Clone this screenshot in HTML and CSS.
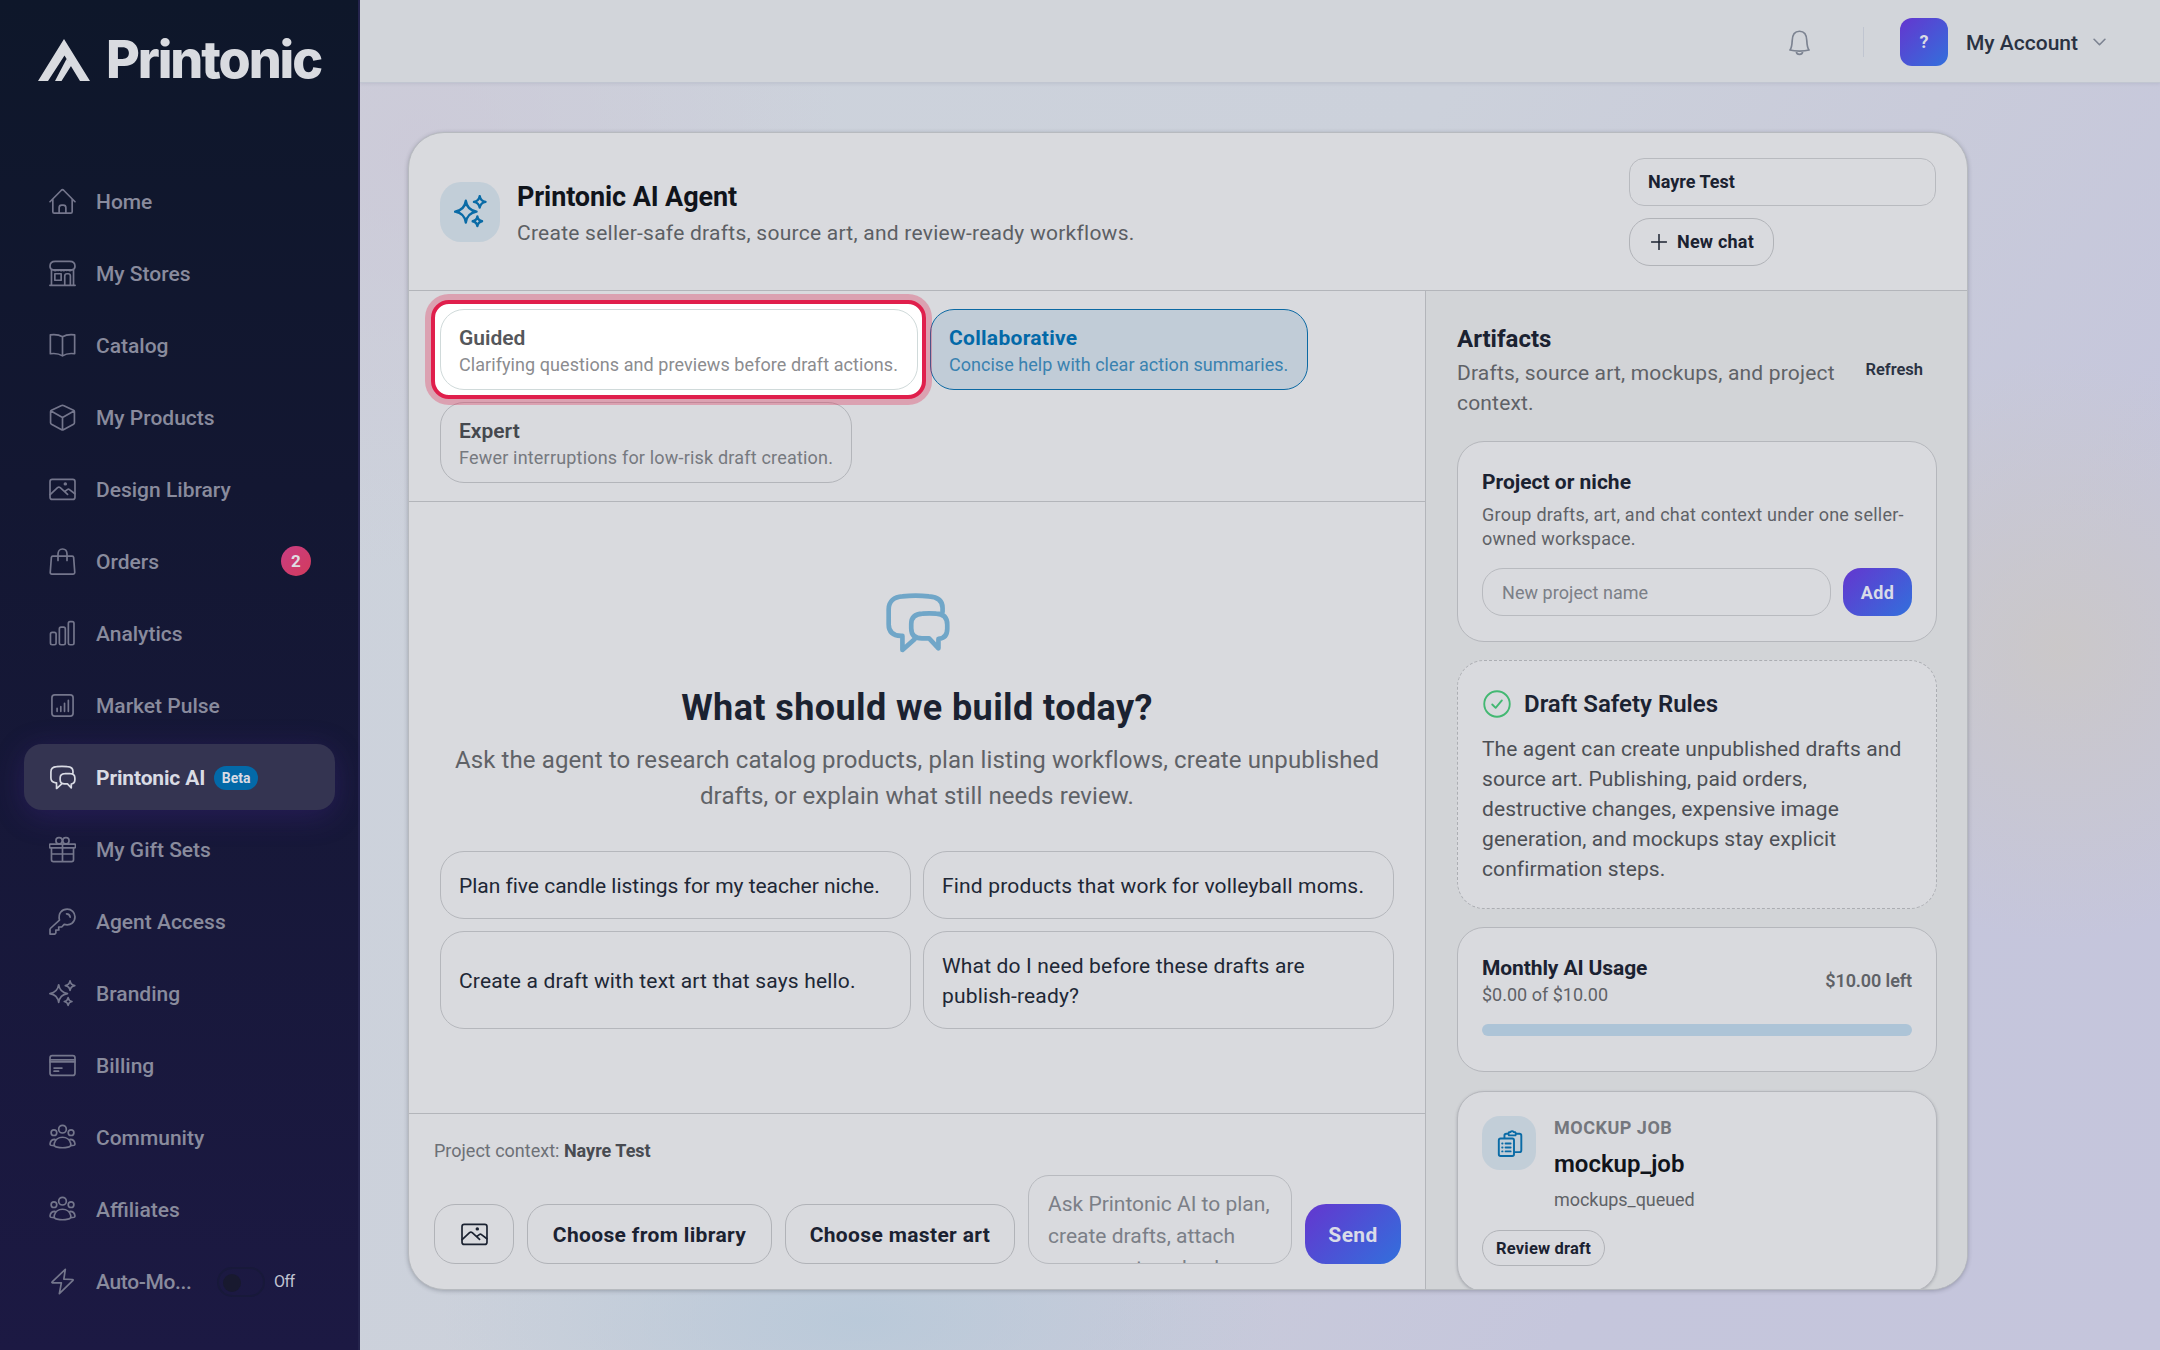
FILE: index.html
```
<!DOCTYPE html>
<html lang="en">
<head>
  <meta charset="UTF-8" />
  <meta name="viewport" content="width=device-width, initial-scale=1.0" />
  <title>Printonic AI Agent</title>
  <link rel="stylesheet" href="styles.css">
</head>
<body>
  <!-- Shared icons -->
  <svg class="sprite">
    <symbol id="i-home" viewBox="0 0 24 24"><path d="M.9 12.2 11 2q1-.9 2 0l10.100 10.200M3.400 10v11q0 1.300 1.300 1.300h14.600q1.300 0 1.300-1.300V10M9 22v-4.500q0-2.300 2.300-2.300h1.400q2.300 0 2.300 2.300V22"/></symbol>
    <symbol id="i-store" viewBox="0 0 24 24"><path d="M.8 22.500h22.400M2.200 22.500V8.300M21.800 22.500V8.300M5.500 1.300h13c3 0 4.600 1.600 4.600 4.200 0 1.900-1 3-2.700 3.300H3.600C1.900 8.500.9 7.400.9 5.500c0-2.600 1.600-4.200 4.600-4.200zM3.600 8.800q2 1.300 3.700 0 1 1 2.400 0 1 1.300 2.400 0 1 1.300 2.400 0 1.300 1 2.400 0 1.700 1.300 3.500 0M5.200 12.200h5.600v5.800H5.200zM14 22.500v-8.300q0-2 2-2h1q2 0 2 2v8.300"/></symbol>
    <symbol id="i-book" viewBox="0 0 24 24"><path d="M12 4.200C9 2.400 5 2 1.200 2.500v16.800c3.800-.5 7.800-.1 10.800 1.900 3-2 7-2.400 10.800-1.900V2.500C19 2 15 2.400 12 4.200zm0 0v17"/></symbol>
    <symbol id="i-box" viewBox="0 0 24 24"><path d="M12 1.200q.4 0 .8.200l9 4.200q.8.400.8 1.200v9.800q0 .9-.8 1.300l-9 4.900q-.8.400-1.600 0l-9-4.900q-.8-.4-.8-1.300V6.800q0-.8.800-1.200l9-4.200q.4-.2.800-.2zM1.800 6.300 12 12l10.200-5.700M12 12v11"/></symbol>
    <symbol id="i-image" viewBox="0 0 24 24"><rect x=".9" y="3" width="22.200" height="17.800" rx="2"/><path d="M1 16.500l6.600-6.200q1.200-1 2.400 0l6.500 6M14 13.800l2.300-1.700q1-.7 1.900 0l4.800 3.700"/><circle cx="14.500" cy="7" r=".8"/></symbol>
    <symbol id="i-bag" viewBox="0 0 24 24"><path d="M3.300 7.300h17.400q1 0 1.200 1l1 13.500q0 1.400-1.400 1.400H2.500q-1.400 0-1.400-1.400l1-13.500q.2-1 1.200-1zM8 11V5.500C8 2.800 9.500.9 12 .9s4 1.900 4 4.600V11"/></symbol>
    <symbol id="i-bars" viewBox="0 0 24 24"><rect x="1.300" y="11" width="5" height="11" rx="1.500"/><rect x="9.200" y="6.300" width="5.300" height="15.700" rx="1.500"/><rect x="17.200" y="1.500" width="5" height="20.500" rx="1.500"/></symbol>
    <symbol id="i-chart" viewBox="0 0 24 24"><rect x="2.600" y="2.600" width="18.800" height="18.800" rx="2.500"/><path d="M7.200 14.500v2.700M10.500 13v4.200M13.800 10v7.200M17.200 7.500v9.700"/></symbol>
    <symbol id="i-chat" viewBox="0 0 24 24"><path d="M21.300 8V6.500c0-3-2-4-5-4.200a50 50 0 0 0-9.600 0C3.700 2.500 1.700 4 1.700 7v5.500c0 2.700 1.500 4 4.500 4.200h.5v5.100l4.400-3.900M14 8.600q2.500-.2 5 0c2.600.1 4 1.400 4 4v1.500c0 2.300-1 3.500-3.200 3.700v3.400l-3.400-3.600h-2.600c-2.600 0-3.900-1.300-3.900-3.700v-1.500c0-2.600 1.400-3.700 4.100-3.800z"/></symbol>
    <symbol id="i-gift" viewBox="0 0 24 24"><path d="M.9 7.200h22.200q.4 0 .4.700v1.700q0 .9-.9.900H1.400q-.9 0-.9-.9V7.900q0-.7.400-.7zM2.200 10.500V21q0 1.700 1.700 1.700h16.200q1.700 0 1.700-1.700V10.500M12 7.200v15.500M2.200 16h19.600"/><rect x="6.200" y="1.500" width="5.500" height="5.500" rx="2.500"/><rect x="12.300" y="1.500" width="5.500" height="5.500" rx="2.500"/></symbol>
    <symbol id="i-key" viewBox="0 0 24 24"><path d="M9.300 10.700C7.900 4.600 11.500 1 16.200 1c3.800 0 6.900 3 6.900 6.800 0 4.800-3.800 8.200-9.600 6.800l-2.200 2.300H8.600l.1 2.600-2.600.2v2.500l-1 1H.9v-4q0-.7.500-1.200zM15.600 5.200q2.800 0 3.200 3"/></symbol>
    <symbol id="i-sparkles" viewBox="0 0 24 24"><path d="M8.600 4.200c.6 4.300 3.400 7.200 7.800 7.900-4.400.7-7.200 3.600-7.800 7.900-.6-4.300-3.400-7.200-7.800-7.900 4.400-.7 7.200-3.600 7.800-7.900zM18.700.8c.4 2.300 1.900 3.800 4.200 4.200-2.300.4-3.800 1.900-4.200 4.200-.4-2.300-1.900-3.800-4.200-4.200 2.300-.4 3.800-1.900 4.200-4.200zM17 15.600c.3 1.900 1.500 3.100 3.400 3.500-1.900.4-3.100 1.600-3.400 3.500-.3-1.900-1.500-3.100-3.400-3.500 1.900-.4 3.100-1.600 3.400-3.500z"/></symbol>
    <symbol id="i-card" viewBox="0 0 24 24"><rect x=".9" y="3.200" width="22.200" height="17.600" rx="2"/><path d="M1 7h22M1 8.800h22M4.500 14.300h7M4.500 17h4"/></symbol>
    <symbol id="i-people" viewBox="0 0 24 24"><circle cx="12" cy="4.600" r="3.400"/><circle cx="4.400" cy="7.700" r="2.500"/><circle cx="19.600" cy="7.700" r="2.500"/><path d="M12 11.800c3.600 0 6.300 2.100 7.300 5.400.5 1.900-.5 3.100-2.400 3.400q-4.900 1-9.800 0c-1.900-.3-2.900-1.500-2.400-3.400 1-3.300 3.700-5.400 7.300-5.400zM5.300 13.700c-2.500 0-4.100 1.300-4.400 4.100q0 .9.800 1.100l2.800.3M18.700 13.700c2.500 0 4.100 1.300 4.400 4.100q0 .9-.8 1.100l-2.800.3"/></symbol>
    <symbol id="i-bolt" viewBox="0 0 24 24"><path d="M14.500 1.200 2.800 12.400q-.6.700.3.800l7.900.1-1.800 9.500L21.300 11q.5-.7-.4-.8l-7.700-.3z"/></symbol>
    <symbol id="i-bell" viewBox="0 0 24 24"><path d="M3.500 18.700c1.500-1.600 1.800-3.900 2-8.200C5.600 5.300 8 2 12 2s6.400 3.300 6.500 8.500c.2 4.300.5 6.600 2 8.200-4.500 1.200-12.500 1.200-17 0zM9.200 19.800c0 1.700 1.100 2.800 2.800 2.800s2.800-1.100 2.800-2.800"/></symbol>
    <symbol id="i-clipboard" viewBox="0 0 24 24"><path d="M7.500 7V5q0-1.700 1.700-1.700h1.600M18 3.300h2.800q1.700 0 1.700 1.700v13q0 1.700-1.700 1.700h-4.300M11.500 4.800q-1.300-3 1.300-3 1.500-1.600 3 0 2.700 0 1.500 3z"/><rect x="2.500" y="7.500" width="13.500" height="15.600" rx="1.500"/><path d="M5.500 12h.3M8.500 12h4.500M5.500 15.500h.3M8.500 15.500h4.500M5.500 19h.3M8.500 19h4.500"/></symbol>
  </svg>

  <aside class="sidebar">
    <div class="logo">
      <svg viewBox="0 0 52 42"><path fill="#d9dbe0" d="M26 0 52 42H42L26.500 16.500 10 42H0zM28.500 20l4.500 7-9.500 15H17z"/></svg>
      <span>Printonic</span>
    </div>
    <nav class="nav">
      <a class="nav-item"><svg class="icon"><use href="#i-home"/></svg>Home</a>
      <a class="nav-item"><svg class="icon"><use href="#i-store"/></svg>My Stores</a>
      <a class="nav-item"><svg class="icon"><use href="#i-book"/></svg>Catalog</a>
      <a class="nav-item"><svg class="icon"><use href="#i-box"/></svg>My Products</a>
      <a class="nav-item"><svg class="icon"><use href="#i-image"/></svg>Design Library</a>
      <a class="nav-item"><svg class="icon"><use href="#i-bag"/></svg>Orders<span class="count">2</span></a>
      <a class="nav-item"><svg class="icon"><use href="#i-bars"/></svg>Analytics</a>
      <a class="nav-item"><svg class="icon"><use href="#i-chart"/></svg>Market Pulse</a>
      <a class="nav-item active"><svg class="icon"><use href="#i-chat"/></svg>Printonic AI<span class="beta">Beta</span></a>
      <a class="nav-item"><svg class="icon"><use href="#i-gift"/></svg>My Gift Sets</a>
      <a class="nav-item"><svg class="icon"><use href="#i-key"/></svg>Agent Access</a>
      <a class="nav-item"><svg class="icon"><use href="#i-sparkles"/></svg>Branding</a>
      <a class="nav-item"><svg class="icon"><use href="#i-card"/></svg>Billing</a>
      <a class="nav-item"><svg class="icon"><use href="#i-people"/></svg>Community</a>
      <a class="nav-item"><svg class="icon"><use href="#i-people"/></svg>Affiliates</a>
      <a class="nav-item"><svg class="icon"><use href="#i-bolt"/></svg><span class="auto">Auto-Mo...</span><span class="toggle"><i></i></span><span class="off">Off</span></a>
    </nav>
  </aside>

  <div class="page">
    <header class="topbar">
      <svg class="icon bell"><use href="#i-bell"/></svg>
      <span class="divider"></span>
      <span class="avatar">?</span>
      <span class="account">My Account</span>
      <svg class="icon chevron" viewBox="0 0 12 7"><path d="m1 1 5 5 5-5"/></svg>
    </header>

    <main class="agent">
      <div class="agent-head">
        <span class="tile"><svg class="icon"><use href="#i-sparkles"/></svg></span>
        <div class="agent-title">
          <h1>Printonic AI Agent</h1>
          <p>Create seller-safe drafts, source art, and review-ready workflows.</p>
        </div>
        <div class="agent-actions">
          <div class="select">Nayre Test</div>
          <button class="btn new-chat"><svg class="icon" viewBox="0 0 16 16"><path d="M8 .5v15M.5 8h15"/></svg>New chat</button>
        </div>
      </div>

      <div class="agent-body">
        <section class="chat">
          <div class="modes">
            <button class="mode guided"><b>Guided</b><span>Clarifying questions and previews before draft actions.</span></button>
            <button class="mode selected"><b>Collaborative</b><span>Concise help with clear action summaries.</span></button>
            <button class="mode expert"><b>Expert</b><span>Fewer interruptions for low-risk draft creation.</span></button>
          </div>

          <div class="welcome">
            <svg class="icon"><use href="#i-chat"/></svg>
            <h2>What should we build today?</h2>
            <p>Ask the agent to research catalog products, plan listing workflows, create unpublished<br>drafts, or explain what still needs review.</p>
            <div class="prompts">
              <button class="plan">Plan five candle listings for my teacher niche.</button>
              <button>Find products that work for volleyball moms.</button>
              <button>Create a draft with text art that says hello.</button>
              <button>What do I need before these drafts are<br>publish-ready?</button>
            </div>
          </div>

          <div class="composer">
            <div class="context">Project context: <b>Nayre Test</b></div>
            <div class="composer-row">
              <button class="btn attach"><svg class="icon"><use href="#i-image"/></svg></button>
              <button class="btn library">Choose from library</button>
              <button class="btn master">Choose master art</button>
              <div class="message">Ask Printonic AI to plan,<br>create drafts, attach<br>source art, and ask</div>
              <button class="btn primary send">Send</button>
            </div>
          </div>
        </section>

        <aside class="artifacts">
          <div class="artifacts-head">
            <div>
              <h3>Artifacts</h3>
              <p>Drafts, source art, mockups, and project<br>context.</p>
            </div>
            <span class="refresh">Refresh</span>
          </div>

          <div class="card project">
            <h4>Project or niche</h4>
            <p>Group drafts, art, and chat context under one seller-<br>owned workspace.</p>
            <div class="project-row">
              <div class="input">New project name</div>
              <button class="btn primary add">Add</button>
            </div>
          </div>

          <div class="card safety">
            <h4><svg class="icon" viewBox="0 0 24 24"><circle cx="12" cy="12" r="10.200"/><path d="m8.200 12.400 2.700 2.700 5-6"/></svg>Draft Safety Rules</h4>
            <p>The agent can create unpublished drafts and<br>source art. Publishing, paid orders,<br>destructive changes, expensive image<br>generation, and mockups stay explicit<br>confirmation steps.</p>
          </div>

          <div class="card usage">
            <div class="usage-row">
              <div>
                <h4>Monthly AI Usage</h4>
                <p>$0.00 of $10.00</p>
              </div>
              <span>$10.00 left</span>
            </div>
            <div class="bar"></div>
          </div>

          <div class="card job">
            <div class="job-row">
              <span class="tile small"><svg class="icon"><use href="#i-clipboard"/></svg></span>
              <div>
                <div class="kind">MOCKUP JOB</div>
                <h4>mockup_job</h4>
                <p>mockups_queued</p>
              </div>
            </div>
            <button class="btn review">Review draft</button>
          </div>
        </aside>
      </div>
    </main>
  </div>
</body>
</html>
```
FILE: styles.css
```
* {
  box-sizing: border-box;
}
body {
  margin: 0;
  width: 2160px;
  height: 1350px;
  display: flex;
  overflow: hidden;
  font-family: Roboto, sans-serif;
  font-size: 21px;
  color: #1b2231;
}
h1, h2, h3, h4, p {
  margin: 0;
}
button {
  font: inherit;
  color: inherit;
  background: none;
  margin: 0;
}
.sprite {
  display: none;
}
.icon {
  width: 27px;
  height: 27px;
  flex: none;
  fill: none;
  stroke: currentColor;
  stroke-width: 1.5;
  stroke-linecap: round;
  stroke-linejoin: round;
}

/* Sidebar */
.sidebar {
  width: 360px;
  flex: none;
  padding: 0 24px;
  background: linear-gradient(180deg, #0e172a 0%, #131732 36%, #1c1943 100%);
  border-right: 2px solid #24234c;
}
.logo {
  display: flex;
  align-items: center;
  height: 120px;
  margin-bottom: 48px;
  padding-left: 14px;
}
.logo svg {
  width: 52px;
  height: 42px;
}
.logo span {
  margin-left: 16px;
  font-family: Inter, sans-serif;
  font-size: 52px;
  font-weight: 800;
  letter-spacing: -2.1px;
  line-height: 120px;
  color: #d9dbe0;
}
.nav {
  display: flex;
  flex-direction: column;
  gap: 6px;
}
.nav-item {
  width: 311px;
  height: 66px;
  display: flex;
  align-items: center;
  padding: 1px 24px 0 25px;
  border-radius: 18px;
  font-weight: 500;
  color: #898b9d;
}
.nav-item .icon {
  margin: -1px 20px 0 0;
  color: #74768c;
}
.nav-item.active {
  background: #343451;
  box-shadow: 0 6px 30px rgba(76, 40, 160, 0.3);
  font-weight: 700;
  letter-spacing: -0.15px;
  color: #d9dbe4;
}
.nav-item.active .icon {
  color: #d9dbe4;
}
.count {
  margin: -1px 0 0 auto;
  width: 30px;
  height: 30px;
  border-radius: 50%;
  background: linear-gradient(135deg, #c93d83, #d33b5c);
  font-size: 17px;
  font-weight: 700;
  line-height: 30px;
  text-align: center;
  color: #dfdce2;
}
.beta {
  margin-left: 9px;
  width: 44px;
  height: 24px;
  border-radius: 12px;
  background: #0369a8;
  font-size: 14px;
  font-weight: 700;
  line-height: 24px;
  text-align: center;
  letter-spacing: 0;
}
.auto {
  width: 96px;
  letter-spacing: -0.35px;
  white-space: nowrap;
}
.toggle {
  margin-left: 25px;
  width: 48px;
  height: 30px;
  padding: 4px;
  border: 2px solid #18193a;
  border-radius: 15px;
}
.toggle i {
  display: block;
  width: 18px;
  height: 18px;
  margin-top: 1px;
  border-radius: 50%;
  background: #18192f;
}
.off {
  margin-left: 9px;
  font-size: 16px;
  font-weight: 400;
  letter-spacing: -0.5px;
  color: #c2c4d2;
}

/* Page */
.page {
  flex: 1;
  background:
    radial-gradient(circle 290px at 1700px 650px, rgba(204, 200, 196, 0.8), rgba(204, 200, 196, 0)),
    radial-gradient(ellipse 420px 170px at 500px 1320px, rgba(184, 201, 217, 0.9), rgba(184, 201, 217, 0)),
    radial-gradient(ellipse 420px 420px at 60px 150px, rgba(204, 199, 215, 0.7), rgba(204, 199, 215, 0)),
    linear-gradient(125deg, #cdd3dc 0%, #ccd1db 42%, #c9cbda 60%, #c5c6dc 78%, #c5c5dc 100%);
}
.topbar {
  height: 83px;
  display: flex;
  align-items: center;
  justify-content: flex-end;
  padding: 2px 54px 0 0;
  background: #d2d5da;
  border-bottom: 1px solid #c1c6d1;
  box-shadow: 0 1px 3px rgba(80, 90, 120, 0.12);
}
.bell {
  color: #7c8391;
}
.divider {
  width: 1px;
  height: 30px;
  margin: 0 36px 0 50px;
  background: #c0c5d0;
}
.avatar {
  width: 48px;
  height: 48px;
  border-radius: 12px;
  background: linear-gradient(135deg, #6436cf, #3270dc);
  font-size: 18px;
  font-weight: 700;
  line-height: 48px;
  text-align: center;
  color: #d9dbe4;
}
.account {
  margin: 1px 15px 0 18px;
  font-weight: 500;
  color: #2a3242;
}
.chevron {
  width: 13px;
  height: 8px;
  color: #7c8391;
}

/* Agent window */
.agent {
  width: 1560px;
  height: 1158px;
  margin: 49px 0 0 48px;
  border: 1px solid #b7babf;
  border-radius: 36px;
  overflow: hidden;
  background: #d9dade;
  box-shadow: 0 1px 4px rgba(40, 45, 60, 0.3);
}
.agent-head {
  height: 158px;
  display: flex;
  align-items: center;
  padding: 0 31px;
  border-bottom: 1px solid #b3b5ba;
}
.tile {
  width: 60px;
  height: 60px;
  flex: none;
  display: flex;
  align-items: center;
  justify-content: center;
  border-radius: 21px;
  background: #c2ced8;
  color: #0a6ba6;
}
.tile .icon {
  width: 33px;
  height: 33px;
  stroke-width: 1.7;
}
.agent-title {
  flex: 1;
  margin-left: 17px;
  padding-top: 4px;
}
.agent-title h1 {
  font-size: 27px;
  line-height: 36px;
  letter-spacing: -0.1px;
  color: #10141b;
}
.agent-title p {
  margin-top: 3px;
  line-height: 30px;
  letter-spacing: 0.25px;
  color: #5c5f64;
}
.agent-actions {
  width: 307px;
  display: flex;
  flex-direction: column;
  align-items: flex-start;
  gap: 12px;
}
.select {
  width: 100%;
  height: 48px;
  padding-left: 18px;
  border: 1px solid #b8babf;
  border-radius: 15px;
  font-size: 18px;
  font-weight: 700;
  line-height: 46px;
}
.btn {
  display: flex;
  align-items: center;
  justify-content: center;
  height: 60px;
  padding: 0;
  flex: none;
  border: 1px solid #b1b3b8;
  border-radius: 21px;
  font-weight: 700;
  letter-spacing: 0.35px;
}
.new-chat {
  width: 145px;
  height: 48px;
  padding-left: 2px;
  font-size: 18px;
  letter-spacing: 0.2px;
}
.new-chat .icon {
  width: 16px;
  height: 16px;
  margin-right: 10px;
}
.primary {
  border: 0;
  background: linear-gradient(135deg, #6436cf, #3270dc);
  color: #d9dbe8;
}
.agent-body {
  display: grid;
  grid-template-columns: 1016px 542px;
  height: 998px;
}
.chat {
  display: flex;
  flex-direction: column;
}
.modes {
  display: flex;
  flex-wrap: wrap;
  gap: 12px;
  height: 211px;
  padding: 18px 31px;
  border-bottom: 1px solid #b3b5ba;
}
.mode {
  position: relative;
  height: 81px;
  display: flex;
  flex-direction: column;
  padding: 13px 18px 0;
  border: 1px solid #b3b5ba;
  border-radius: 24px;
  text-align: left;
  color: #45484e;
}
.mode b {
  font-weight: 600;
  line-height: 30px;
}
.mode span {
  font-size: 18px;
  line-height: 24px;
  letter-spacing: 0.07px;
  white-space: nowrap;
  color: #76797f;
}
.guided {
  z-index: 1;
  width: 478px;
  border-color: #d8e0e0;
  color: #55575b;
}
.guided span {
  color: #8b8c8f;
}
/* Highlight ring around the guided mode */
.guided::before,
.guided::after {
  content: "";
  position: absolute;
  z-index: -1;
}
.guided::before {
  inset: -10px -9px -10px -10px;
  border: 4px solid #e01f4c;
  border-radius: 18px;
  background: #fff;
  box-shadow: 0 0 0 6px rgba(225, 29, 72, 0.3);
}
.guided::after {
  inset: -1px;
  border: 1px solid #d0dada;
  border-radius: 24px;
}
.selected {
  width: 378px;
  border-color: #0c69a3;
  background: #c1ccd7;
  color: #0369a8;
}
.selected b {
  font-weight: 700;
  letter-spacing: 0.29px;
}
.selected span {
  letter-spacing: 0.03px;
  color: #3a82b0;
}
.expert {
  width: 412px;
}
.expert span {
  letter-spacing: 0.19px;
}
.welcome {
  flex: 1;
  display: flex;
  flex-direction: column;
  align-items: center;
  padding: 88px 31px 0 31px;
}
.welcome > .icon {
  width: 66px;
  height: 66px;
  stroke-width: 1.7;
  color: #70a6c8;
}
.welcome h2 {
  margin-top: 30px;
  font-size: 36px;
  line-height: 45px;
  letter-spacing: 0.4px;
}
.welcome p {
  margin-top: 11px;
  font-size: 24px;
  line-height: 36px;
  letter-spacing: 0.11px;
  text-align: center;
  color: #5f6267;
}
.prompts {
  width: 100%;
  display: grid;
  grid-template-columns: 1fr 1fr;
  gap: 12px;
  margin-top: 37px;
}
.prompts button {
  padding: 19px 18px 17px;
  border: 1px solid #b5b7bc;
  border-radius: 24px;
  line-height: 30px;
  letter-spacing: 0.17px;
  text-align: left;
  color: #202735;
}
.prompts .plan {
  letter-spacing: -0.02px;
}
.composer {
  height: 176px;
  padding: 23px 24px 0 25px;
  border-top: 1px solid #b3b5ba;
}
.context {
  font-size: 18px;
  line-height: 27px;
  color: #6d7076;
}
.context b {
  color: #484b51;
}
.composer-row {
  display: flex;
  align-items: flex-end;
  gap: 13px;
  margin-top: 11px;
}
.composer-row .btn {
  padding-top: 1px;
}
.attach {
  width: 80px;
}
.library {
  width: 245px;
}
.master {
  width: 230px;
}
.message {
  flex: 1;
  height: 89px;
  padding: 12px 0 0 19px;
  border: 1px solid #b8babf;
  border-radius: 21px;
  overflow: hidden;
  line-height: 32px;
  white-space: nowrap;
  color: #7b7f87;
}
.send {
  width: 96px;
}

/* Artifacts column */
.artifacts {
  padding: 30px 30px 0 31px;
  border-left: 1px solid #b3b5ba;
  background: #d2d4d7;
  overflow: hidden;
}
.artifacts-head {
  display: flex;
  align-items: center;
  justify-content: space-between;
  padding-right: 14px;
}
.artifacts-head h3 {
  font-size: 24px;
  line-height: 36px;
}
.artifacts-head p {
  padding-top: 1px;
  margin-bottom: -1px;
  line-height: 30px;
  letter-spacing: 0.18px;
  color: #5f6267;
}
.refresh {
  font-size: 16.5px;
  font-weight: 600;
  color: #2a3242;
}
.card {
  margin-top: 18px;
  padding: 24px;
  border: 1px solid #b5b7bc;
  border-radius: 27px;
  background: #d9dade;
}
.card h4 {
  line-height: 30px;
}
.card p {
  font-size: 18px;
  line-height: 24px;
  color: #5f6267;
}
.project {
  height: 201px;
  margin-top: 24px;
  padding-top: 25px;
}
.project p {
  margin-top: 6px;
  letter-spacing: 0.24px;
}
.project-row {
  display: flex;
  gap: 12px;
  margin-top: 17px;
}
.input {
  flex: 1;
  height: 48px;
  padding-left: 19px;
  border: 1px solid #b8babf;
  border-radius: 21px;
  font-size: 18px;
  line-height: 47px;
  letter-spacing: 0.05px;
  color: #7b7f87;
}
.add {
  width: 69px;
  height: 48px;
  font-size: 18px;
  border-radius: 18px;
}
.safety {
  height: 249px;
  padding-top: 25px;
  border-style: dashed;
  border-color: #acaeb3;
}
.safety h4 {
  display: flex;
  align-items: center;
  font-size: 24px;
  font-weight: 600;
  line-height: 36px;
}
.safety .icon {
  width: 30px;
  height: 30px;
  margin-right: 12px;
  color: #43b872;
}
.safety p {
  margin-top: 12px;
  font-size: 21px;
  line-height: 30px;
  letter-spacing: 0.09px;
  color: #4c4f55;
}
.usage {
  height: 145px;
  padding-top: 25px;
}
.usage-row {
  display: flex;
  align-items: center;
  justify-content: space-between;
}
.usage h4 {
  letter-spacing: -0.1px;
}
.usage span {
  font-size: 18px;
  font-weight: 600;
  letter-spacing: -0.1px;
  color: #5f6267;
}
.bar {
  height: 12px;
  margin-top: 17px;
  border-radius: 6px;
  background: #adc4d7;
}
.job {
  height: 201px;
  margin-top: 19px;
  box-shadow: 0 1px 3px rgba(40, 45, 60, 0.25);
}
.job-row {
  display: flex;
  gap: 18px;
}
.small {
  width: 54px;
  height: 54px;
  border-radius: 18px;
}
.small .icon {
  width: 27px;
  height: 27px;
}
.kind {
  font-size: 18px;
  font-weight: 700;
  line-height: 24px;
  letter-spacing: 0.5px;
  color: #74777d;
}
.job h4 {
  margin-top: 6px;
  font-size: 24px;
  font-weight: 600;
  line-height: 36px;
  color: #10141b;
}
.job p {
  margin-top: 4px;
  line-height: 27px;
  letter-spacing: -0.05px;
}
.review {
  width: 123px;
  height: 36px;
  margin-top: 17px;
  border-radius: 18px;
  font-size: 16.5px;
  letter-spacing: 0.2px;
}
```
